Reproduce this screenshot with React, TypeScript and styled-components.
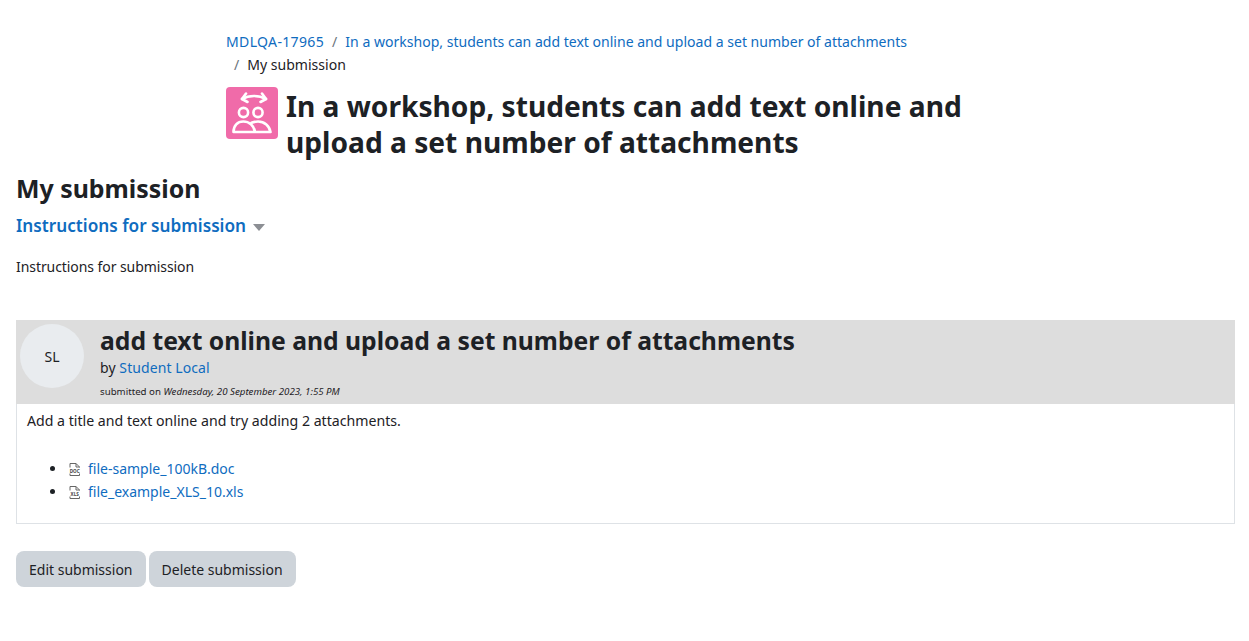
import React, { FC } from 'react';
import styled, { createGlobalStyle } from 'styled-components';

const GlobalStyle = createGlobalStyle`
  html, body {
    margin: 0;
    background: #fff;
  }
  body {
    font-family: "Noto Sans", "Open Sans", sans-serif;
    font-size: 14px;
    line-height: 21px;
    color: #1d2125;
  }
`;

const Page = styled.div`
  width: 1249px;
  height: 641px;
  box-sizing: border-box;
  padding: 30px 14px 0 16px;
  overflow: hidden;
`;

const PageHeader = styled.header`
  width: 740px;
  margin-left: 210px;
`;

const Breadcrumb = styled.nav`
  display: flex;
  flex-wrap: wrap;
  font-size: 14.05px;
  line-height: 23px;
  margin-bottom: 11px;
`;

const Crumb = styled.span`
  &::before {
    content: '/';
    color: #6a737b;
    padding: 0 8px;
  }
`;

const FirstCrumb = styled.span`
  letter-spacing: 0.33px;
`;

const CrumbLink = styled.a`
  color: #0f6cbf;
  text-decoration: none;
`;

const TitleRow = styled.div`
  display: flex;
  align-items: flex-start;
  gap: 8px;
`;

const ActivityIcon = styled.div`
  width: 52px;
  height: 52px;
  flex: none;
  border-radius: 4px;
  background: #f06ba9;
`;

const PageTitle = styled.h1`
  margin: 1px 0 0;
  font-size: 28.15px;
  line-height: 36px;
  font-weight: 700;
`;

const SectionTitle = styled.h2`
  margin: 11px 0 0;
  font-size: 24.9px;
  line-height: 34px;
  font-weight: 700;
`;

const InstructionsToggle = styled.a`
  display: flex;
  align-items: center;
  gap: 7px;
  width: fit-content;
  margin-top: 8px;
  color: #0f6cbf;
  font-size: 17.2px;
  line-height: 26px;
  font-weight: 600;
  text-decoration: none;

  &::after {
    content: '';
    border-left: 6.5px solid transparent;
    border-right: 6.5px solid transparent;
    border-top: 7px solid #8c8f94;
    margin-top: 3px;
  }
`;

const InstructionsText = styled.p`
  margin: 17px 0 0;
  letter-spacing: -0.07px;
`;

const Submission = styled.section`
  margin-top: 43px;
  border: 1px solid #dee2e6;
  border-top: 0;
`;

const SubmissionHeader = styled.div`
  display: flex;
  gap: 16px;
  height: 84px;
  margin: 0 -1px;
  padding-left: 4px;
  background: #dddddd;
`;

const Avatar = styled.div`
  width: 64px;
  height: 64px;
  margin-top: 4px;
  flex: none;
  border-radius: 50%;
  background: #e9ecef;
  display: flex;
  align-items: center;
  justify-content: center;
`;

const HeaderText = styled.div`
  display: flex;
  flex-direction: column;
`;

const SubmissionTitle = styled.h3`
  margin: 3px 0 0;
  font-size: 24.7px;
  line-height: 35px;
  font-weight: 700;
`;

const Author = styled.div`
  line-height: 19px;
  letter-spacing: 0.08px;
`;

const Submitted = styled.div`
  margin-top: 8px;
  font-size: 9.7px;
  line-height: 14px;
`;

const AuthorLink = styled.a`
  color: #0f6cbf;
  text-decoration: none;
`;

const SubmissionBody = styled.div`
  padding: 6px 10px 20px;
`;

const BodyText = styled.p`
  margin: 0 0 26px;
  font-size: 14.15px;
`;

const Attachments = styled.ul`
  margin: 0;
  padding-left: 40px;
`;

const Attachment = styled.li`
  height: 23px;
  line-height: 23px;
`;

const FileLink = styled.a`
  display: inline-flex;
  align-items: center;
  gap: 7px;
  height: 23px;
  vertical-align: top;
  color: #0f6cbf;
  text-decoration: none;
`;

const Actions = styled.div`
  display: flex;
  gap: 3px;
  margin-top: 27px;
`;

const Button = styled.button`
  height: 36px;
  padding: 0 13px;
  border: 0;
  border-radius: 8px;
  background: #ced4da;
  color: #1d2125;
  font: inherit;
`;

const WorkshopIcon: FC = () => (
  <svg width="52" height="52" viewBox="0 0 52 52" fill="none" stroke="#fff" strokeWidth="2.6" strokeLinecap="round" strokeLinejoin="round">
    <path d="M16 12c7-4 17-4 24 0" />
    <path d="M20 6.500l-4 5.500 5.500 3M36 6.500l4 5.500-5.500 3" />
    <circle cx="17.500" cy="25.500" r="4.600" />
    <circle cx="32" cy="25.500" r="4.600" />
    <path d="M7.500 45c0-6.500 4-10.500 9.800-10.500S28 38.500 29 45zM25.500 35.800c2-.8 4.500-1.300 6.500-1.300 6.500 0 11.500 4.500 12.500 10.500H29" />
  </svg>
);

const FileIcon: FC<{ label: string }> = ({ label }) => (
  <svg width="14" height="14" viewBox="0 0 14 14" fill="none">
    <path d="M3 5.500V1.500h6l3.500 3.500v.5M3 11.500v2h9.500v-2M9 1.500V5h3.500" stroke="#666" />
    <text x="7.700" y="10.600" textAnchor="middle" fontSize="4.600" fontWeight="700" fill="#444">{label}</text>
  </svg>
);

const App: FC = () => (
  <>
    <GlobalStyle />
    <Page>
      <PageHeader>
        <Breadcrumb>
          <FirstCrumb>
            <CrumbLink href="#">MDLQA-17965</CrumbLink>
          </FirstCrumb>
          <Crumb>
            <CrumbLink href="#">In a workshop, students can add text online and upload a set number of attachments</CrumbLink>
          </Crumb>
          <Crumb>My submission</Crumb>
        </Breadcrumb>
        <TitleRow>
          <ActivityIcon>
            <WorkshopIcon />
          </ActivityIcon>
          <PageTitle>In a workshop, students can add text online and upload a set number of attachments</PageTitle>
        </TitleRow>
      </PageHeader>

      <SectionTitle>My submission</SectionTitle>
      <InstructionsToggle href="#">Instructions for submission</InstructionsToggle>
      <InstructionsText>Instructions for submission</InstructionsText>

      <Submission>
        <SubmissionHeader>
          <Avatar>SL</Avatar>
          <HeaderText>
            <SubmissionTitle>add text online and upload a set number of attachments</SubmissionTitle>
            <Author>
              by <AuthorLink href="#">Student Local</AuthorLink>
            </Author>
            <Submitted>
              submitted on <em>Wednesday, 20 September 2023, 1:55 PM</em>
            </Submitted>
          </HeaderText>
        </SubmissionHeader>
        <SubmissionBody>
          <BodyText>Add a title and text online and try adding 2 attachments.</BodyText>
          <Attachments>
            <Attachment>
              <FileLink href="#">
                <FileIcon label="DOC" />
                file-sample_100kB.doc
              </FileLink>
            </Attachment>
            <Attachment>
              <FileLink href="#">
                <FileIcon label="XLS" />
                file_example_XLS_10.xls
              </FileLink>
            </Attachment>
          </Attachments>
        </SubmissionBody>
      </Submission>

      <Actions>
        <Button>Edit submission</Button>
        <Button>Delete submission</Button>
      </Actions>
    </Page>
  </>
);

export default App;
